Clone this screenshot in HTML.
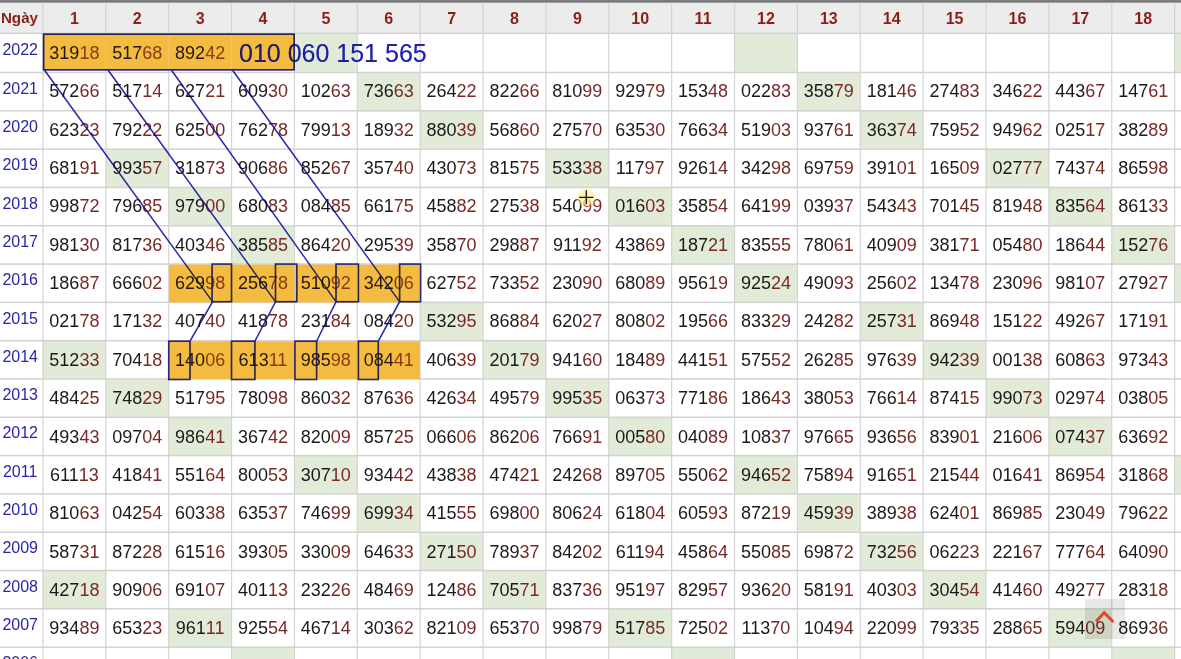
<!DOCTYPE html><html><head><meta charset="utf-8"><style>
html,body{margin:0;padding:0;background:#fff;}
#r{filter:blur(0.35px);position:relative;width:1181px;height:659px;overflow:hidden;background:#fff;font-family:"Liberation Sans",sans-serif;}
.a{position:absolute;left:0;top:0;}
.t{position:absolute;display:flex;align-items:center;justify-content:center;white-space:nowrap;}
#tx{position:absolute;left:0;top:0;width:1181px;height:659px;will-change:transform;}
.n{font-size:18px;color:#1a1a1a;}
.n b{font-weight:normal;color:#782a26;}
.n.o{color:#24180a;} .n.o b{color:#8a3a12;}
.y{font-size:16px;color:#2626a8;}
.h{font-size:15.2px;font-weight:bold;color:#8a1f18;}
</style></head><body><div id="r">
<svg class="a" width="1181" height="659" viewBox="0 0 1181 659"><rect x="0" y="0" width="1181" height="3" fill="#7a7a7a"/><rect x="0" y="2.7" width="1181" height="30.60" fill="#ececec"/><rect x="294.43" y="33.30" width="62.87" height="39.20" fill="#e1ebd8"/><rect x="734.52" y="33.30" width="62.87" height="39.20" fill="#e1ebd8"/><rect x="1174.61" y="33.30" width="62.87" height="39.20" fill="#e1ebd8"/><rect x="357.30" y="72.50" width="62.87" height="38.31" fill="#e1ebd8"/><rect x="797.39" y="72.50" width="62.87" height="38.31" fill="#e1ebd8"/><rect x="420.17" y="110.81" width="62.87" height="38.31" fill="#e1ebd8"/><rect x="860.26" y="110.81" width="62.87" height="38.31" fill="#e1ebd8"/><rect x="105.82" y="149.12" width="62.87" height="38.31" fill="#e1ebd8"/><rect x="545.91" y="149.12" width="62.87" height="38.31" fill="#e1ebd8"/><rect x="986.00" y="149.12" width="62.87" height="38.31" fill="#e1ebd8"/><rect x="168.69" y="187.43" width="62.87" height="38.31" fill="#e1ebd8"/><rect x="608.78" y="187.43" width="62.87" height="38.31" fill="#e1ebd8"/><rect x="1048.87" y="187.43" width="62.87" height="38.31" fill="#e1ebd8"/><rect x="231.56" y="225.74" width="62.87" height="38.31" fill="#e1ebd8"/><rect x="671.65" y="225.74" width="62.87" height="38.31" fill="#e1ebd8"/><rect x="1111.74" y="225.74" width="62.87" height="38.31" fill="#e1ebd8"/><rect x="294.43" y="264.05" width="62.87" height="38.31" fill="#e1ebd8"/><rect x="734.52" y="264.05" width="62.87" height="38.31" fill="#e1ebd8"/><rect x="1174.61" y="264.05" width="62.87" height="38.31" fill="#e1ebd8"/><rect x="420.17" y="302.36" width="62.87" height="38.31" fill="#e1ebd8"/><rect x="860.26" y="302.36" width="62.87" height="38.31" fill="#e1ebd8"/><rect x="42.95" y="340.67" width="62.87" height="38.31" fill="#e1ebd8"/><rect x="483.04" y="340.67" width="62.87" height="38.31" fill="#e1ebd8"/><rect x="923.13" y="340.67" width="62.87" height="38.31" fill="#e1ebd8"/><rect x="105.82" y="378.98" width="62.87" height="38.31" fill="#e1ebd8"/><rect x="545.91" y="378.98" width="62.87" height="38.31" fill="#e1ebd8"/><rect x="986.00" y="378.98" width="62.87" height="38.31" fill="#e1ebd8"/><rect x="168.69" y="417.29" width="62.87" height="38.31" fill="#e1ebd8"/><rect x="608.78" y="417.29" width="62.87" height="38.31" fill="#e1ebd8"/><rect x="1048.87" y="417.29" width="62.87" height="38.31" fill="#e1ebd8"/><rect x="294.43" y="455.60" width="62.87" height="38.31" fill="#e1ebd8"/><rect x="734.52" y="455.60" width="62.87" height="38.31" fill="#e1ebd8"/><rect x="1174.61" y="455.60" width="62.87" height="38.31" fill="#e1ebd8"/><rect x="357.30" y="493.91" width="62.87" height="38.31" fill="#e1ebd8"/><rect x="797.39" y="493.91" width="62.87" height="38.31" fill="#e1ebd8"/><rect x="420.17" y="532.22" width="62.87" height="38.31" fill="#e1ebd8"/><rect x="860.26" y="532.22" width="62.87" height="38.31" fill="#e1ebd8"/><rect x="42.95" y="570.53" width="62.87" height="38.31" fill="#e1ebd8"/><rect x="483.04" y="570.53" width="62.87" height="38.31" fill="#e1ebd8"/><rect x="923.13" y="570.53" width="62.87" height="38.31" fill="#e1ebd8"/><rect x="168.69" y="608.84" width="62.87" height="38.31" fill="#e1ebd8"/><rect x="608.78" y="608.84" width="62.87" height="38.31" fill="#e1ebd8"/><rect x="1048.87" y="608.84" width="62.87" height="38.31" fill="#e1ebd8"/><rect x="231.56" y="647.15" width="62.87" height="38.31" fill="#e1ebd8"/><rect x="671.65" y="647.15" width="62.87" height="38.31" fill="#e1ebd8"/><rect x="1111.74" y="647.15" width="62.87" height="38.31" fill="#e1ebd8"/><rect x="42.35" y="2.7" width="1.2" height="660" fill="#d4d4d4"/><rect x="105.22" y="2.7" width="1.2" height="660" fill="#d4d4d4"/><rect x="168.09" y="2.7" width="1.2" height="660" fill="#d4d4d4"/><rect x="230.96" y="2.7" width="1.2" height="660" fill="#d4d4d4"/><rect x="293.83" y="2.7" width="1.2" height="660" fill="#d4d4d4"/><rect x="356.70" y="2.7" width="1.2" height="660" fill="#d4d4d4"/><rect x="419.57" y="2.7" width="1.2" height="660" fill="#d4d4d4"/><rect x="482.44" y="2.7" width="1.2" height="660" fill="#d4d4d4"/><rect x="545.31" y="2.7" width="1.2" height="660" fill="#d4d4d4"/><rect x="608.18" y="2.7" width="1.2" height="660" fill="#d4d4d4"/><rect x="671.05" y="2.7" width="1.2" height="660" fill="#d4d4d4"/><rect x="733.92" y="2.7" width="1.2" height="660" fill="#d4d4d4"/><rect x="796.79" y="2.7" width="1.2" height="660" fill="#d4d4d4"/><rect x="859.66" y="2.7" width="1.2" height="660" fill="#d4d4d4"/><rect x="922.53" y="2.7" width="1.2" height="660" fill="#d4d4d4"/><rect x="985.40" y="2.7" width="1.2" height="660" fill="#d4d4d4"/><rect x="1048.27" y="2.7" width="1.2" height="660" fill="#d4d4d4"/><rect x="1111.14" y="2.7" width="1.2" height="660" fill="#d4d4d4"/><rect x="1174.01" y="2.7" width="1.2" height="660" fill="#d4d4d4"/><rect x="1236.88" y="2.7" width="1.2" height="660" fill="#d4d4d4"/><rect x="0" y="32.55" width="1181" height="1.5" fill="#d2d2d2"/><rect x="0" y="71.75" width="1181" height="1.5" fill="#d2d2d2"/><rect x="0" y="110.06" width="1181" height="1.5" fill="#d2d2d2"/><rect x="0" y="148.37" width="1181" height="1.5" fill="#d2d2d2"/><rect x="0" y="186.68" width="1181" height="1.5" fill="#d2d2d2"/><rect x="0" y="224.99" width="1181" height="1.5" fill="#d2d2d2"/><rect x="0" y="263.30" width="1181" height="1.5" fill="#d2d2d2"/><rect x="0" y="301.61" width="1181" height="1.5" fill="#d2d2d2"/><rect x="0" y="339.92" width="1181" height="1.5" fill="#d2d2d2"/><rect x="0" y="378.23" width="1181" height="1.5" fill="#d2d2d2"/><rect x="0" y="416.54" width="1181" height="1.5" fill="#d2d2d2"/><rect x="0" y="454.85" width="1181" height="1.5" fill="#d2d2d2"/><rect x="0" y="493.16" width="1181" height="1.5" fill="#d2d2d2"/><rect x="0" y="531.47" width="1181" height="1.5" fill="#d2d2d2"/><rect x="0" y="569.78" width="1181" height="1.5" fill="#d2d2d2"/><rect x="0" y="608.09" width="1181" height="1.5" fill="#d2d2d2"/><rect x="0" y="646.40" width="1181" height="1.5" fill="#d2d2d2"/><rect x="0" y="684.71" width="1181" height="1.5" fill="#d2d2d2"/><rect x="168.99" y="264.65" width="62.27" height="37.71" fill="#f3bb3f"/><rect x="231.86" y="264.65" width="62.27" height="37.71" fill="#f3bb3f"/><rect x="294.73" y="264.65" width="62.27" height="37.71" fill="#f3bb3f"/><rect x="357.60" y="264.65" width="62.27" height="37.71" fill="#f3bb3f"/><rect x="168.99" y="341.27" width="62.27" height="37.71" fill="#f3bb3f"/><rect x="231.86" y="341.27" width="62.27" height="37.71" fill="#f3bb3f"/><rect x="294.73" y="341.27" width="62.27" height="37.71" fill="#f3bb3f"/><rect x="357.60" y="341.27" width="62.27" height="37.71" fill="#f3bb3f"/><rect x="42.95" y="33.90" width="251.48" height="36.00" fill="#f3bb3f"/><rect x="105.22" y="33.90" width="1.2" height="36" fill="#f2c464"/><rect x="168.09" y="33.90" width="1.2" height="36" fill="#f2c464"/><rect x="230.96" y="33.90" width="1.2" height="36" fill="#f2c464"/></svg>
<div id="tx">
<div class="t h" style="left:-2px;top:2.5px;width:42.95px;height:30px;">Ngày</div>
<div class="t h" style="left:42.95px;top:4.0px;width:62.87px;height:30px;font-size:16px;">1</div>
<div class="t h" style="left:105.82px;top:4.0px;width:62.87px;height:30px;font-size:16px;">2</div>
<div class="t h" style="left:168.69px;top:4.0px;width:62.87px;height:30px;font-size:16px;">3</div>
<div class="t h" style="left:231.56px;top:4.0px;width:62.87px;height:30px;font-size:16px;">4</div>
<div class="t h" style="left:294.43px;top:4.0px;width:62.87px;height:30px;font-size:16px;">5</div>
<div class="t h" style="left:357.30px;top:4.0px;width:62.87px;height:30px;font-size:16px;">6</div>
<div class="t h" style="left:420.17px;top:4.0px;width:62.87px;height:30px;font-size:16px;">7</div>
<div class="t h" style="left:483.04px;top:4.0px;width:62.87px;height:30px;font-size:16px;">8</div>
<div class="t h" style="left:545.91px;top:4.0px;width:62.87px;height:30px;font-size:16px;">9</div>
<div class="t h" style="left:608.78px;top:4.0px;width:62.87px;height:30px;font-size:16px;">10</div>
<div class="t h" style="left:671.65px;top:4.0px;width:62.87px;height:30px;font-size:16px;">11</div>
<div class="t h" style="left:734.52px;top:4.0px;width:62.87px;height:30px;font-size:16px;">12</div>
<div class="t h" style="left:797.39px;top:4.0px;width:62.87px;height:30px;font-size:16px;">13</div>
<div class="t h" style="left:860.26px;top:4.0px;width:62.87px;height:30px;font-size:16px;">14</div>
<div class="t h" style="left:923.13px;top:4.0px;width:62.87px;height:30px;font-size:16px;">15</div>
<div class="t h" style="left:986.00px;top:4.0px;width:62.87px;height:30px;font-size:16px;">16</div>
<div class="t h" style="left:1048.87px;top:4.0px;width:62.87px;height:30px;font-size:16px;">17</div>
<div class="t h" style="left:1111.74px;top:4.0px;width:62.87px;height:30px;font-size:16px;">18</div>
<div class="t h" style="left:1174.61px;top:4.0px;width:62.87px;height:30px;font-size:16px;">19</div>
<div class="t y" style="left:-1.3px;top:31.30px;width:42.95px;height:38.36px;">2022</div>
<div class="t n o" style="left:42.95px;top:34.60px;width:62.87px;height:38.36px;">319<b>18</b></div>
<div class="t n o" style="left:105.82px;top:34.60px;width:62.87px;height:38.36px;">517<b>68</b></div>
<div class="t n o" style="left:168.69px;top:34.60px;width:62.87px;height:38.36px;">892<b>42</b></div>
<div class="t y" style="left:-1.3px;top:69.59px;width:42.95px;height:38.36px;">2021</div>
<div class="t n" style="left:42.95px;top:72.66px;width:62.87px;height:38.36px;">572<b>66</b></div>
<div class="t n" style="left:105.82px;top:72.66px;width:62.87px;height:38.36px;">517<b>14</b></div>
<div class="t n" style="left:168.69px;top:72.66px;width:62.87px;height:38.36px;">627<b>21</b></div>
<div class="t n" style="left:231.56px;top:72.66px;width:62.87px;height:38.36px;">609<b>30</b></div>
<div class="t n" style="left:294.43px;top:72.66px;width:62.87px;height:38.36px;">102<b>63</b></div>
<div class="t n" style="left:357.30px;top:72.66px;width:62.87px;height:38.36px;">736<b>63</b></div>
<div class="t n" style="left:420.17px;top:72.66px;width:62.87px;height:38.36px;">264<b>22</b></div>
<div class="t n" style="left:483.04px;top:72.66px;width:62.87px;height:38.36px;">822<b>66</b></div>
<div class="t n" style="left:545.91px;top:72.66px;width:62.87px;height:38.36px;">810<b>99</b></div>
<div class="t n" style="left:608.78px;top:72.66px;width:62.87px;height:38.36px;">929<b>79</b></div>
<div class="t n" style="left:671.65px;top:72.66px;width:62.87px;height:38.36px;">153<b>48</b></div>
<div class="t n" style="left:734.52px;top:72.66px;width:62.87px;height:38.36px;">022<b>83</b></div>
<div class="t n" style="left:797.39px;top:72.66px;width:62.87px;height:38.36px;">358<b>79</b></div>
<div class="t n" style="left:860.26px;top:72.66px;width:62.87px;height:38.36px;">181<b>46</b></div>
<div class="t n" style="left:923.13px;top:72.66px;width:62.87px;height:38.36px;">274<b>83</b></div>
<div class="t n" style="left:986.00px;top:72.66px;width:62.87px;height:38.36px;">346<b>22</b></div>
<div class="t n" style="left:1048.87px;top:72.66px;width:62.87px;height:38.36px;">443<b>67</b></div>
<div class="t n" style="left:1111.74px;top:72.66px;width:62.87px;height:38.36px;">147<b>61</b></div>
<div class="t y" style="left:-1.3px;top:107.88px;width:42.95px;height:38.36px;">2020</div>
<div class="t n" style="left:42.95px;top:111.02px;width:62.87px;height:38.36px;">623<b>23</b></div>
<div class="t n" style="left:105.82px;top:111.02px;width:62.87px;height:38.36px;">792<b>22</b></div>
<div class="t n" style="left:168.69px;top:111.02px;width:62.87px;height:38.36px;">625<b>00</b></div>
<div class="t n" style="left:231.56px;top:111.02px;width:62.87px;height:38.36px;">762<b>78</b></div>
<div class="t n" style="left:294.43px;top:111.02px;width:62.87px;height:38.36px;">799<b>13</b></div>
<div class="t n" style="left:357.30px;top:111.02px;width:62.87px;height:38.36px;">189<b>32</b></div>
<div class="t n" style="left:420.17px;top:111.02px;width:62.87px;height:38.36px;">880<b>39</b></div>
<div class="t n" style="left:483.04px;top:111.02px;width:62.87px;height:38.36px;">568<b>60</b></div>
<div class="t n" style="left:545.91px;top:111.02px;width:62.87px;height:38.36px;">275<b>70</b></div>
<div class="t n" style="left:608.78px;top:111.02px;width:62.87px;height:38.36px;">635<b>30</b></div>
<div class="t n" style="left:671.65px;top:111.02px;width:62.87px;height:38.36px;">766<b>34</b></div>
<div class="t n" style="left:734.52px;top:111.02px;width:62.87px;height:38.36px;">519<b>03</b></div>
<div class="t n" style="left:797.39px;top:111.02px;width:62.87px;height:38.36px;">937<b>61</b></div>
<div class="t n" style="left:860.26px;top:111.02px;width:62.87px;height:38.36px;">363<b>74</b></div>
<div class="t n" style="left:923.13px;top:111.02px;width:62.87px;height:38.36px;">759<b>52</b></div>
<div class="t n" style="left:986.00px;top:111.02px;width:62.87px;height:38.36px;">949<b>62</b></div>
<div class="t n" style="left:1048.87px;top:111.02px;width:62.87px;height:38.36px;">025<b>17</b></div>
<div class="t n" style="left:1111.74px;top:111.02px;width:62.87px;height:38.36px;">382<b>89</b></div>
<div class="t y" style="left:-1.3px;top:146.17px;width:42.95px;height:38.36px;">2019</div>
<div class="t n" style="left:42.95px;top:149.38px;width:62.87px;height:38.36px;">681<b>91</b></div>
<div class="t n" style="left:105.82px;top:149.38px;width:62.87px;height:38.36px;">993<b>57</b></div>
<div class="t n" style="left:168.69px;top:149.38px;width:62.87px;height:38.36px;">318<b>73</b></div>
<div class="t n" style="left:231.56px;top:149.38px;width:62.87px;height:38.36px;">906<b>86</b></div>
<div class="t n" style="left:294.43px;top:149.38px;width:62.87px;height:38.36px;">852<b>67</b></div>
<div class="t n" style="left:357.30px;top:149.38px;width:62.87px;height:38.36px;">357<b>40</b></div>
<div class="t n" style="left:420.17px;top:149.38px;width:62.87px;height:38.36px;">430<b>73</b></div>
<div class="t n" style="left:483.04px;top:149.38px;width:62.87px;height:38.36px;">815<b>75</b></div>
<div class="t n" style="left:545.91px;top:149.38px;width:62.87px;height:38.36px;">533<b>38</b></div>
<div class="t n" style="left:608.78px;top:149.38px;width:62.87px;height:38.36px;">117<b>97</b></div>
<div class="t n" style="left:671.65px;top:149.38px;width:62.87px;height:38.36px;">926<b>14</b></div>
<div class="t n" style="left:734.52px;top:149.38px;width:62.87px;height:38.36px;">342<b>98</b></div>
<div class="t n" style="left:797.39px;top:149.38px;width:62.87px;height:38.36px;">697<b>59</b></div>
<div class="t n" style="left:860.26px;top:149.38px;width:62.87px;height:38.36px;">391<b>01</b></div>
<div class="t n" style="left:923.13px;top:149.38px;width:62.87px;height:38.36px;">165<b>09</b></div>
<div class="t n" style="left:986.00px;top:149.38px;width:62.87px;height:38.36px;">027<b>77</b></div>
<div class="t n" style="left:1048.87px;top:149.38px;width:62.87px;height:38.36px;">743<b>74</b></div>
<div class="t n" style="left:1111.74px;top:149.38px;width:62.87px;height:38.36px;">865<b>98</b></div>
<div class="t y" style="left:-1.3px;top:184.46px;width:42.95px;height:38.36px;">2018</div>
<div class="t n" style="left:42.95px;top:187.74px;width:62.87px;height:38.36px;">998<b>72</b></div>
<div class="t n" style="left:105.82px;top:187.74px;width:62.87px;height:38.36px;">796<b>85</b></div>
<div class="t n" style="left:168.69px;top:187.74px;width:62.87px;height:38.36px;">979<b>00</b></div>
<div class="t n" style="left:231.56px;top:187.74px;width:62.87px;height:38.36px;">680<b>83</b></div>
<div class="t n" style="left:294.43px;top:187.74px;width:62.87px;height:38.36px;">084<b>85</b></div>
<div class="t n" style="left:357.30px;top:187.74px;width:62.87px;height:38.36px;">661<b>75</b></div>
<div class="t n" style="left:420.17px;top:187.74px;width:62.87px;height:38.36px;">458<b>82</b></div>
<div class="t n" style="left:483.04px;top:187.74px;width:62.87px;height:38.36px;">275<b>38</b></div>
<div class="t n" style="left:545.91px;top:187.74px;width:62.87px;height:38.36px;">540<b>99</b></div>
<div class="t n" style="left:608.78px;top:187.74px;width:62.87px;height:38.36px;">016<b>03</b></div>
<div class="t n" style="left:671.65px;top:187.74px;width:62.87px;height:38.36px;">358<b>54</b></div>
<div class="t n" style="left:734.52px;top:187.74px;width:62.87px;height:38.36px;">641<b>99</b></div>
<div class="t n" style="left:797.39px;top:187.74px;width:62.87px;height:38.36px;">039<b>37</b></div>
<div class="t n" style="left:860.26px;top:187.74px;width:62.87px;height:38.36px;">543<b>43</b></div>
<div class="t n" style="left:923.13px;top:187.74px;width:62.87px;height:38.36px;">701<b>45</b></div>
<div class="t n" style="left:986.00px;top:187.74px;width:62.87px;height:38.36px;">819<b>48</b></div>
<div class="t n" style="left:1048.87px;top:187.74px;width:62.87px;height:38.36px;">835<b>64</b></div>
<div class="t n" style="left:1111.74px;top:187.74px;width:62.87px;height:38.36px;">861<b>33</b></div>
<div class="t y" style="left:-1.3px;top:222.75px;width:42.95px;height:38.36px;">2017</div>
<div class="t n" style="left:42.95px;top:226.10px;width:62.87px;height:38.36px;">981<b>30</b></div>
<div class="t n" style="left:105.82px;top:226.10px;width:62.87px;height:38.36px;">817<b>36</b></div>
<div class="t n" style="left:168.69px;top:226.10px;width:62.87px;height:38.36px;">403<b>46</b></div>
<div class="t n" style="left:231.56px;top:226.10px;width:62.87px;height:38.36px;">385<b>85</b></div>
<div class="t n" style="left:294.43px;top:226.10px;width:62.87px;height:38.36px;">864<b>20</b></div>
<div class="t n" style="left:357.30px;top:226.10px;width:62.87px;height:38.36px;">295<b>39</b></div>
<div class="t n" style="left:420.17px;top:226.10px;width:62.87px;height:38.36px;">358<b>70</b></div>
<div class="t n" style="left:483.04px;top:226.10px;width:62.87px;height:38.36px;">298<b>87</b></div>
<div class="t n" style="left:545.91px;top:226.10px;width:62.87px;height:38.36px;">911<b>92</b></div>
<div class="t n" style="left:608.78px;top:226.10px;width:62.87px;height:38.36px;">438<b>69</b></div>
<div class="t n" style="left:671.65px;top:226.10px;width:62.87px;height:38.36px;">187<b>21</b></div>
<div class="t n" style="left:734.52px;top:226.10px;width:62.87px;height:38.36px;">835<b>55</b></div>
<div class="t n" style="left:797.39px;top:226.10px;width:62.87px;height:38.36px;">780<b>61</b></div>
<div class="t n" style="left:860.26px;top:226.10px;width:62.87px;height:38.36px;">409<b>09</b></div>
<div class="t n" style="left:923.13px;top:226.10px;width:62.87px;height:38.36px;">381<b>71</b></div>
<div class="t n" style="left:986.00px;top:226.10px;width:62.87px;height:38.36px;">054<b>80</b></div>
<div class="t n" style="left:1048.87px;top:226.10px;width:62.87px;height:38.36px;">186<b>44</b></div>
<div class="t n" style="left:1111.74px;top:226.10px;width:62.87px;height:38.36px;">152<b>76</b></div>
<div class="t y" style="left:-1.3px;top:261.04px;width:42.95px;height:38.36px;">2016</div>
<div class="t n" style="left:42.95px;top:264.46px;width:62.87px;height:38.36px;">186<b>87</b></div>
<div class="t n" style="left:105.82px;top:264.46px;width:62.87px;height:38.36px;">666<b>02</b></div>
<div class="t n o" style="left:168.69px;top:264.46px;width:62.87px;height:38.36px;">629<b>98</b></div>
<div class="t n o" style="left:231.56px;top:264.46px;width:62.87px;height:38.36px;">256<b>78</b></div>
<div class="t n o" style="left:294.43px;top:264.46px;width:62.87px;height:38.36px;">510<b>92</b></div>
<div class="t n o" style="left:357.30px;top:264.46px;width:62.87px;height:38.36px;">342<b>06</b></div>
<div class="t n" style="left:420.17px;top:264.46px;width:62.87px;height:38.36px;">627<b>52</b></div>
<div class="t n" style="left:483.04px;top:264.46px;width:62.87px;height:38.36px;">733<b>52</b></div>
<div class="t n" style="left:545.91px;top:264.46px;width:62.87px;height:38.36px;">230<b>90</b></div>
<div class="t n" style="left:608.78px;top:264.46px;width:62.87px;height:38.36px;">680<b>89</b></div>
<div class="t n" style="left:671.65px;top:264.46px;width:62.87px;height:38.36px;">956<b>19</b></div>
<div class="t n" style="left:734.52px;top:264.46px;width:62.87px;height:38.36px;">925<b>24</b></div>
<div class="t n" style="left:797.39px;top:264.46px;width:62.87px;height:38.36px;">490<b>93</b></div>
<div class="t n" style="left:860.26px;top:264.46px;width:62.87px;height:38.36px;">256<b>02</b></div>
<div class="t n" style="left:923.13px;top:264.46px;width:62.87px;height:38.36px;">134<b>78</b></div>
<div class="t n" style="left:986.00px;top:264.46px;width:62.87px;height:38.36px;">230<b>96</b></div>
<div class="t n" style="left:1048.87px;top:264.46px;width:62.87px;height:38.36px;">981<b>07</b></div>
<div class="t n" style="left:1111.74px;top:264.46px;width:62.87px;height:38.36px;">279<b>27</b></div>
<div class="t y" style="left:-1.3px;top:299.33px;width:42.95px;height:38.36px;">2015</div>
<div class="t n" style="left:42.95px;top:302.82px;width:62.87px;height:38.36px;">021<b>78</b></div>
<div class="t n" style="left:105.82px;top:302.82px;width:62.87px;height:38.36px;">171<b>32</b></div>
<div class="t n" style="left:168.69px;top:302.82px;width:62.87px;height:38.36px;">407<b>40</b></div>
<div class="t n" style="left:231.56px;top:302.82px;width:62.87px;height:38.36px;">418<b>78</b></div>
<div class="t n" style="left:294.43px;top:302.82px;width:62.87px;height:38.36px;">231<b>84</b></div>
<div class="t n" style="left:357.30px;top:302.82px;width:62.87px;height:38.36px;">084<b>20</b></div>
<div class="t n" style="left:420.17px;top:302.82px;width:62.87px;height:38.36px;">532<b>95</b></div>
<div class="t n" style="left:483.04px;top:302.82px;width:62.87px;height:38.36px;">868<b>84</b></div>
<div class="t n" style="left:545.91px;top:302.82px;width:62.87px;height:38.36px;">620<b>27</b></div>
<div class="t n" style="left:608.78px;top:302.82px;width:62.87px;height:38.36px;">808<b>02</b></div>
<div class="t n" style="left:671.65px;top:302.82px;width:62.87px;height:38.36px;">195<b>66</b></div>
<div class="t n" style="left:734.52px;top:302.82px;width:62.87px;height:38.36px;">833<b>29</b></div>
<div class="t n" style="left:797.39px;top:302.82px;width:62.87px;height:38.36px;">242<b>82</b></div>
<div class="t n" style="left:860.26px;top:302.82px;width:62.87px;height:38.36px;">257<b>31</b></div>
<div class="t n" style="left:923.13px;top:302.82px;width:62.87px;height:38.36px;">869<b>48</b></div>
<div class="t n" style="left:986.00px;top:302.82px;width:62.87px;height:38.36px;">151<b>22</b></div>
<div class="t n" style="left:1048.87px;top:302.82px;width:62.87px;height:38.36px;">492<b>67</b></div>
<div class="t n" style="left:1111.74px;top:302.82px;width:62.87px;height:38.36px;">171<b>91</b></div>
<div class="t y" style="left:-1.3px;top:337.62px;width:42.95px;height:38.36px;">2014</div>
<div class="t n" style="left:42.95px;top:341.18px;width:62.87px;height:38.36px;">512<b>33</b></div>
<div class="t n" style="left:105.82px;top:341.18px;width:62.87px;height:38.36px;">704<b>18</b></div>
<div class="t n o" style="left:168.69px;top:341.18px;width:62.87px;height:38.36px;">140<b>06</b></div>
<div class="t n o" style="left:231.56px;top:341.18px;width:62.87px;height:38.36px;">613<b>11</b></div>
<div class="t n o" style="left:294.43px;top:341.18px;width:62.87px;height:38.36px;">985<b>98</b></div>
<div class="t n o" style="left:357.30px;top:341.18px;width:62.87px;height:38.36px;">084<b>41</b></div>
<div class="t n" style="left:420.17px;top:341.18px;width:62.87px;height:38.36px;">406<b>39</b></div>
<div class="t n" style="left:483.04px;top:341.18px;width:62.87px;height:38.36px;">201<b>79</b></div>
<div class="t n" style="left:545.91px;top:341.18px;width:62.87px;height:38.36px;">941<b>60</b></div>
<div class="t n" style="left:608.78px;top:341.18px;width:62.87px;height:38.36px;">184<b>89</b></div>
<div class="t n" style="left:671.65px;top:341.18px;width:62.87px;height:38.36px;">441<b>51</b></div>
<div class="t n" style="left:734.52px;top:341.18px;width:62.87px;height:38.36px;">575<b>52</b></div>
<div class="t n" style="left:797.39px;top:341.18px;width:62.87px;height:38.36px;">262<b>85</b></div>
<div class="t n" style="left:860.26px;top:341.18px;width:62.87px;height:38.36px;">976<b>39</b></div>
<div class="t n" style="left:923.13px;top:341.18px;width:62.87px;height:38.36px;">942<b>39</b></div>
<div class="t n" style="left:986.00px;top:341.18px;width:62.87px;height:38.36px;">001<b>38</b></div>
<div class="t n" style="left:1048.87px;top:341.18px;width:62.87px;height:38.36px;">608<b>63</b></div>
<div class="t n" style="left:1111.74px;top:341.18px;width:62.87px;height:38.36px;">973<b>43</b></div>
<div class="t y" style="left:-1.3px;top:375.91px;width:42.95px;height:38.36px;">2013</div>
<div class="t n" style="left:42.95px;top:379.54px;width:62.87px;height:38.36px;">484<b>25</b></div>
<div class="t n" style="left:105.82px;top:379.54px;width:62.87px;height:38.36px;">748<b>29</b></div>
<div class="t n" style="left:168.69px;top:379.54px;width:62.87px;height:38.36px;">517<b>95</b></div>
<div class="t n" style="left:231.56px;top:379.54px;width:62.87px;height:38.36px;">780<b>98</b></div>
<div class="t n" style="left:294.43px;top:379.54px;width:62.87px;height:38.36px;">860<b>32</b></div>
<div class="t n" style="left:357.30px;top:379.54px;width:62.87px;height:38.36px;">876<b>36</b></div>
<div class="t n" style="left:420.17px;top:379.54px;width:62.87px;height:38.36px;">426<b>34</b></div>
<div class="t n" style="left:483.04px;top:379.54px;width:62.87px;height:38.36px;">495<b>79</b></div>
<div class="t n" style="left:545.91px;top:379.54px;width:62.87px;height:38.36px;">995<b>35</b></div>
<div class="t n" style="left:608.78px;top:379.54px;width:62.87px;height:38.36px;">063<b>73</b></div>
<div class="t n" style="left:671.65px;top:379.54px;width:62.87px;height:38.36px;">771<b>86</b></div>
<div class="t n" style="left:734.52px;top:379.54px;width:62.87px;height:38.36px;">186<b>43</b></div>
<div class="t n" style="left:797.39px;top:379.54px;width:62.87px;height:38.36px;">380<b>53</b></div>
<div class="t n" style="left:860.26px;top:379.54px;width:62.87px;height:38.36px;">766<b>14</b></div>
<div class="t n" style="left:923.13px;top:379.54px;width:62.87px;height:38.36px;">874<b>15</b></div>
<div class="t n" style="left:986.00px;top:379.54px;width:62.87px;height:38.36px;">990<b>73</b></div>
<div class="t n" style="left:1048.87px;top:379.54px;width:62.87px;height:38.36px;">029<b>74</b></div>
<div class="t n" style="left:1111.74px;top:379.54px;width:62.87px;height:38.36px;">038<b>05</b></div>
<div class="t y" style="left:-1.3px;top:414.20px;width:42.95px;height:38.36px;">2012</div>
<div class="t n" style="left:42.95px;top:417.90px;width:62.87px;height:38.36px;">493<b>43</b></div>
<div class="t n" style="left:105.82px;top:417.90px;width:62.87px;height:38.36px;">097<b>04</b></div>
<div class="t n" style="left:168.69px;top:417.90px;width:62.87px;height:38.36px;">986<b>41</b></div>
<div class="t n" style="left:231.56px;top:417.90px;width:62.87px;height:38.36px;">367<b>42</b></div>
<div class="t n" style="left:294.43px;top:417.90px;width:62.87px;height:38.36px;">820<b>09</b></div>
<div class="t n" style="left:357.30px;top:417.90px;width:62.87px;height:38.36px;">857<b>25</b></div>
<div class="t n" style="left:420.17px;top:417.90px;width:62.87px;height:38.36px;">066<b>06</b></div>
<div class="t n" style="left:483.04px;top:417.90px;width:62.87px;height:38.36px;">862<b>06</b></div>
<div class="t n" style="left:545.91px;top:417.90px;width:62.87px;height:38.36px;">766<b>91</b></div>
<div class="t n" style="left:608.78px;top:417.90px;width:62.87px;height:38.36px;">005<b>80</b></div>
<div class="t n" style="left:671.65px;top:417.90px;width:62.87px;height:38.36px;">040<b>89</b></div>
<div class="t n" style="left:734.52px;top:417.90px;width:62.87px;height:38.36px;">108<b>37</b></div>
<div class="t n" style="left:797.39px;top:417.90px;width:62.87px;height:38.36px;">976<b>65</b></div>
<div class="t n" style="left:860.26px;top:417.90px;width:62.87px;height:38.36px;">936<b>56</b></div>
<div class="t n" style="left:923.13px;top:417.90px;width:62.87px;height:38.36px;">839<b>01</b></div>
<div class="t n" style="left:986.00px;top:417.90px;width:62.87px;height:38.36px;">216<b>06</b></div>
<div class="t n" style="left:1048.87px;top:417.90px;width:62.87px;height:38.36px;">074<b>37</b></div>
<div class="t n" style="left:1111.74px;top:417.90px;width:62.87px;height:38.36px;">636<b>92</b></div>
<div class="t y" style="left:-1.3px;top:452.49px;width:42.95px;height:38.36px;">2011</div>
<div class="t n" style="left:42.95px;top:456.26px;width:62.87px;height:38.36px;">611<b>13</b></div>
<div class="t n" style="left:105.82px;top:456.26px;width:62.87px;height:38.36px;">418<b>41</b></div>
<div class="t n" style="left:168.69px;top:456.26px;width:62.87px;height:38.36px;">551<b>64</b></div>
<div class="t n" style="left:231.56px;top:456.26px;width:62.87px;height:38.36px;">800<b>53</b></div>
<div class="t n" style="left:294.43px;top:456.26px;width:62.87px;height:38.36px;">307<b>10</b></div>
<div class="t n" style="left:357.30px;top:456.26px;width:62.87px;height:38.36px;">934<b>42</b></div>
<div class="t n" style="left:420.17px;top:456.26px;width:62.87px;height:38.36px;">438<b>38</b></div>
<div class="t n" style="left:483.04px;top:456.26px;width:62.87px;height:38.36px;">474<b>21</b></div>
<div class="t n" style="left:545.91px;top:456.26px;width:62.87px;height:38.36px;">242<b>68</b></div>
<div class="t n" style="left:608.78px;top:456.26px;width:62.87px;height:38.36px;">897<b>05</b></div>
<div class="t n" style="left:671.65px;top:456.26px;width:62.87px;height:38.36px;">550<b>62</b></div>
<div class="t n" style="left:734.52px;top:456.26px;width:62.87px;height:38.36px;">946<b>52</b></div>
<div class="t n" style="left:797.39px;top:456.26px;width:62.87px;height:38.36px;">758<b>94</b></div>
<div class="t n" style="left:860.26px;top:456.26px;width:62.87px;height:38.36px;">916<b>51</b></div>
<div class="t n" style="left:923.13px;top:456.26px;width:62.87px;height:38.36px;">215<b>44</b></div>
<div class="t n" style="left:986.00px;top:456.26px;width:62.87px;height:38.36px;">016<b>41</b></div>
<div class="t n" style="left:1048.87px;top:456.26px;width:62.87px;height:38.36px;">869<b>54</b></div>
<div class="t n" style="left:1111.74px;top:456.26px;width:62.87px;height:38.36px;">318<b>68</b></div>
<div class="t y" style="left:-1.3px;top:490.78px;width:42.95px;height:38.36px;">2010</div>
<div class="t n" style="left:42.95px;top:494.62px;width:62.87px;height:38.36px;">810<b>63</b></div>
<div class="t n" style="left:105.82px;top:494.62px;width:62.87px;height:38.36px;">042<b>54</b></div>
<div class="t n" style="left:168.69px;top:494.62px;width:62.87px;height:38.36px;">603<b>38</b></div>
<div class="t n" style="left:231.56px;top:494.62px;width:62.87px;height:38.36px;">635<b>37</b></div>
<div class="t n" style="left:294.43px;top:494.62px;width:62.87px;height:38.36px;">746<b>99</b></div>
<div class="t n" style="left:357.30px;top:494.62px;width:62.87px;height:38.36px;">699<b>34</b></div>
<div class="t n" style="left:420.17px;top:494.62px;width:62.87px;height:38.36px;">415<b>55</b></div>
<div class="t n" style="left:483.04px;top:494.62px;width:62.87px;height:38.36px;">698<b>00</b></div>
<div class="t n" style="left:545.91px;top:494.62px;width:62.87px;height:38.36px;">806<b>24</b></div>
<div class="t n" style="left:608.78px;top:494.62px;width:62.87px;height:38.36px;">618<b>04</b></div>
<div class="t n" style="left:671.65px;top:494.62px;width:62.87px;height:38.36px;">605<b>93</b></div>
<div class="t n" style="left:734.52px;top:494.62px;width:62.87px;height:38.36px;">872<b>19</b></div>
<div class="t n" style="left:797.39px;top:494.62px;width:62.87px;height:38.36px;">459<b>39</b></div>
<div class="t n" style="left:860.26px;top:494.62px;width:62.87px;height:38.36px;">389<b>38</b></div>
<div class="t n" style="left:923.13px;top:494.62px;width:62.87px;height:38.36px;">624<b>01</b></div>
<div class="t n" style="left:986.00px;top:494.62px;width:62.87px;height:38.36px;">869<b>85</b></div>
<div class="t n" style="left:1048.87px;top:494.62px;width:62.87px;height:38.36px;">230<b>49</b></div>
<div class="t n" style="left:1111.74px;top:494.62px;width:62.87px;height:38.36px;">796<b>22</b></div>
<div class="t y" style="left:-1.3px;top:529.07px;width:42.95px;height:38.36px;">2009</div>
<div class="t n" style="left:42.95px;top:532.98px;width:62.87px;height:38.36px;">587<b>31</b></div>
<div class="t n" style="left:105.82px;top:532.98px;width:62.87px;height:38.36px;">872<b>28</b></div>
<div class="t n" style="left:168.69px;top:532.98px;width:62.87px;height:38.36px;">615<b>16</b></div>
<div class="t n" style="left:231.56px;top:532.98px;width:62.87px;height:38.36px;">393<b>05</b></div>
<div class="t n" style="left:294.43px;top:532.98px;width:62.87px;height:38.36px;">330<b>09</b></div>
<div class="t n" style="left:357.30px;top:532.98px;width:62.87px;height:38.36px;">646<b>33</b></div>
<div class="t n" style="left:420.17px;top:532.98px;width:62.87px;height:38.36px;">271<b>50</b></div>
<div class="t n" style="left:483.04px;top:532.98px;width:62.87px;height:38.36px;">789<b>37</b></div>
<div class="t n" style="left:545.91px;top:532.98px;width:62.87px;height:38.36px;">842<b>02</b></div>
<div class="t n" style="left:608.78px;top:532.98px;width:62.87px;height:38.36px;">611<b>94</b></div>
<div class="t n" style="left:671.65px;top:532.98px;width:62.87px;height:38.36px;">458<b>64</b></div>
<div class="t n" style="left:734.52px;top:532.98px;width:62.87px;height:38.36px;">550<b>85</b></div>
<div class="t n" style="left:797.39px;top:532.98px;width:62.87px;height:38.36px;">698<b>72</b></div>
<div class="t n" style="left:860.26px;top:532.98px;width:62.87px;height:38.36px;">732<b>56</b></div>
<div class="t n" style="left:923.13px;top:532.98px;width:62.87px;height:38.36px;">062<b>23</b></div>
<div class="t n" style="left:986.00px;top:532.98px;width:62.87px;height:38.36px;">221<b>67</b></div>
<div class="t n" style="left:1048.87px;top:532.98px;width:62.87px;height:38.36px;">777<b>64</b></div>
<div class="t n" style="left:1111.74px;top:532.98px;width:62.87px;height:38.36px;">640<b>90</b></div>
<div class="t y" style="left:-1.3px;top:567.36px;width:42.95px;height:38.36px;">2008</div>
<div class="t n" style="left:42.95px;top:571.34px;width:62.87px;height:38.36px;">427<b>18</b></div>
<div class="t n" style="left:105.82px;top:571.34px;width:62.87px;height:38.36px;">909<b>06</b></div>
<div class="t n" style="left:168.69px;top:571.34px;width:62.87px;height:38.36px;">691<b>07</b></div>
<div class="t n" style="left:231.56px;top:571.34px;width:62.87px;height:38.36px;">401<b>13</b></div>
<div class="t n" style="left:294.43px;top:571.34px;width:62.87px;height:38.36px;">232<b>26</b></div>
<div class="t n" style="left:357.30px;top:571.34px;width:62.87px;height:38.36px;">484<b>69</b></div>
<div class="t n" style="left:420.17px;top:571.34px;width:62.87px;height:38.36px;">124<b>86</b></div>
<div class="t n" style="left:483.04px;top:571.34px;width:62.87px;height:38.36px;">705<b>71</b></div>
<div class="t n" style="left:545.91px;top:571.34px;width:62.87px;height:38.36px;">837<b>36</b></div>
<div class="t n" style="left:608.78px;top:571.34px;width:62.87px;height:38.36px;">951<b>97</b></div>
<div class="t n" style="left:671.65px;top:571.34px;width:62.87px;height:38.36px;">829<b>57</b></div>
<div class="t n" style="left:734.52px;top:571.34px;width:62.87px;height:38.36px;">936<b>20</b></div>
<div class="t n" style="left:797.39px;top:571.34px;width:62.87px;height:38.36px;">581<b>91</b></div>
<div class="t n" style="left:860.26px;top:571.34px;width:62.87px;height:38.36px;">403<b>03</b></div>
<div class="t n" style="left:923.13px;top:571.34px;width:62.87px;height:38.36px;">304<b>54</b></div>
<div class="t n" style="left:986.00px;top:571.34px;width:62.87px;height:38.36px;">414<b>60</b></div>
<div class="t n" style="left:1048.87px;top:571.34px;width:62.87px;height:38.36px;">492<b>77</b></div>
<div class="t n" style="left:1111.74px;top:571.34px;width:62.87px;height:38.36px;">283<b>18</b></div>
<div class="t y" style="left:-1.3px;top:605.65px;width:42.95px;height:38.36px;">2007</div>
<div class="t n" style="left:42.95px;top:609.70px;width:62.87px;height:38.36px;">934<b>89</b></div>
<div class="t n" style="left:105.82px;top:609.70px;width:62.87px;height:38.36px;">653<b>23</b></div>
<div class="t n" style="left:168.69px;top:609.70px;width:62.87px;height:38.36px;">961<b>11</b></div>
<div class="t n" style="left:231.56px;top:609.70px;width:62.87px;height:38.36px;">925<b>54</b></div>
<div class="t n" style="left:294.43px;top:609.70px;width:62.87px;height:38.36px;">467<b>14</b></div>
<div class="t n" style="left:357.30px;top:609.70px;width:62.87px;height:38.36px;">303<b>62</b></div>
<div class="t n" style="left:420.17px;top:609.70px;width:62.87px;height:38.36px;">821<b>09</b></div>
<div class="t n" style="left:483.04px;top:609.70px;width:62.87px;height:38.36px;">653<b>70</b></div>
<div class="t n" style="left:545.91px;top:609.70px;width:62.87px;height:38.36px;">998<b>79</b></div>
<div class="t n" style="left:608.78px;top:609.70px;width:62.87px;height:38.36px;">517<b>85</b></div>
<div class="t n" style="left:671.65px;top:609.70px;width:62.87px;height:38.36px;">725<b>02</b></div>
<div class="t n" style="left:734.52px;top:609.70px;width:62.87px;height:38.36px;">113<b>70</b></div>
<div class="t n" style="left:797.39px;top:609.70px;width:62.87px;height:38.36px;">104<b>94</b></div>
<div class="t n" style="left:860.26px;top:609.70px;width:62.87px;height:38.36px;">220<b>99</b></div>
<div class="t n" style="left:923.13px;top:609.70px;width:62.87px;height:38.36px;">793<b>35</b></div>
<div class="t n" style="left:986.00px;top:609.70px;width:62.87px;height:38.36px;">288<b>65</b></div>
<div class="t n" style="left:1048.87px;top:609.70px;width:62.87px;height:38.36px;">594<b>09</b></div>
<div class="t n" style="left:1111.74px;top:609.70px;width:62.87px;height:38.36px;">869<b>36</b></div>
<div class="t y" style="left:-1.3px;top:643.94px;width:42.95px;height:38.36px;">2006</div>
</div>
<div class="a" style="left:239px;top:36px;font-size:25px;color:#2323b0;white-space:nowrap;line-height:34px;mix-blend-mode:multiply;">010 060 151 565</div>
<div class="a" style="left:239px;top:36px;font-size:25px;color:#2323b0;white-space:nowrap;line-height:34px;opacity:0.5;">010 060 151 565</div>
<svg class="a" style="mix-blend-mode:multiply" width="1181" height="659" viewBox="0 0 1181 659"><rect x="43.6" y="34.2" width="250.6" height="35.6" fill="none" stroke="#2a2a9a" stroke-width="1.6"/><rect x="212.10" y="264.1" width="19.40" height="37.6" fill="none" stroke="#2a2a9a" stroke-width="1.5"/><rect x="275.50" y="264.1" width="21.30" height="37.6" fill="none" stroke="#2a2a9a" stroke-width="1.5"/><rect x="336.00" y="264.1" width="22.40" height="37.6" fill="none" stroke="#2a2a9a" stroke-width="1.5"/><rect x="399.60" y="264.1" width="21.00" height="37.6" fill="none" stroke="#2a2a9a" stroke-width="1.5"/><rect x="168.70" y="341.2" width="21.30" height="38.3" fill="none" stroke="#2a2a9a" stroke-width="1.5"/><rect x="231.50" y="341.2" width="23.40" height="38.3" fill="none" stroke="#2a2a9a" stroke-width="1.5"/><rect x="294.90" y="341.2" width="21.70" height="38.3" fill="none" stroke="#2a2a9a" stroke-width="1.5"/><rect x="358.40" y="341.2" width="19.90" height="38.3" fill="none" stroke="#2a2a9a" stroke-width="1.5"/><polyline points="44.4,70 212.6,301.7 190.0,341.2" fill="none" stroke="#2a2ab0" stroke-width="1.4"/><polyline points="108.0,70 275.5,301.7 254.9,341.2" fill="none" stroke="#2a2ab0" stroke-width="1.4"/><polyline points="171.4,70 336.0,301.7 316.6,341.2" fill="none" stroke="#2a2ab0" stroke-width="1.4"/><polyline points="232.4,70 399.6,301.7 378.3,341.2" fill="none" stroke="#2a2ab0" stroke-width="1.4"/></svg><svg class="a" style="opacity:0.35" width="1181" height="659" viewBox="0 0 1181 659"><rect x="43.6" y="34.2" width="250.6" height="35.6" fill="none" stroke="#2a2a9a" stroke-width="1.6"/><rect x="212.10" y="264.1" width="19.40" height="37.6" fill="none" stroke="#2a2a9a" stroke-width="1.5"/><rect x="275.50" y="264.1" width="21.30" height="37.6" fill="none" stroke="#2a2a9a" stroke-width="1.5"/><rect x="336.00" y="264.1" width="22.40" height="37.6" fill="none" stroke="#2a2a9a" stroke-width="1.5"/><rect x="399.60" y="264.1" width="21.00" height="37.6" fill="none" stroke="#2a2a9a" stroke-width="1.5"/><rect x="168.70" y="341.2" width="21.30" height="38.3" fill="none" stroke="#2a2a9a" stroke-width="1.5"/><rect x="231.50" y="341.2" width="23.40" height="38.3" fill="none" stroke="#2a2a9a" stroke-width="1.5"/><rect x="294.90" y="341.2" width="21.70" height="38.3" fill="none" stroke="#2a2a9a" stroke-width="1.5"/><rect x="358.40" y="341.2" width="19.90" height="38.3" fill="none" stroke="#2a2a9a" stroke-width="1.5"/><polyline points="44.4,70 212.6,301.7 190.0,341.2" fill="none" stroke="#2a2ab0" stroke-width="1.4"/><polyline points="108.0,70 275.5,301.7 254.9,341.2" fill="none" stroke="#2a2ab0" stroke-width="1.4"/><polyline points="171.4,70 336.0,301.7 316.6,341.2" fill="none" stroke="#2a2ab0" stroke-width="1.4"/><polyline points="232.4,70 399.6,301.7 378.3,341.2" fill="none" stroke="#2a2ab0" stroke-width="1.4"/></svg><svg class="a" width="1181" height="659" viewBox="0 0 1181 659"><rect x="1085" y="599" width="40" height="40" fill="rgba(0,0,0,0.09)"/><polyline points="1096,621.5 1104.2,612.6 1113.4,622" fill="none" stroke="#e0462a" stroke-width="3"/><defs><radialGradient id="gl"><stop offset="0" stop-color="#fff0a0" stop-opacity="0.9"/><stop offset="0.6" stop-color="#fff0a0" stop-opacity="0.7"/><stop offset="1" stop-color="#fff3a0" stop-opacity="0"/></radialGradient></defs><circle cx="586.3" cy="197.4" r="11" fill="url(#gl)"/><path d="M579.1 197.4H593.4M586.3 190.2V204.2" stroke="#111" stroke-width="1.3"/></svg>
</div></body></html>
